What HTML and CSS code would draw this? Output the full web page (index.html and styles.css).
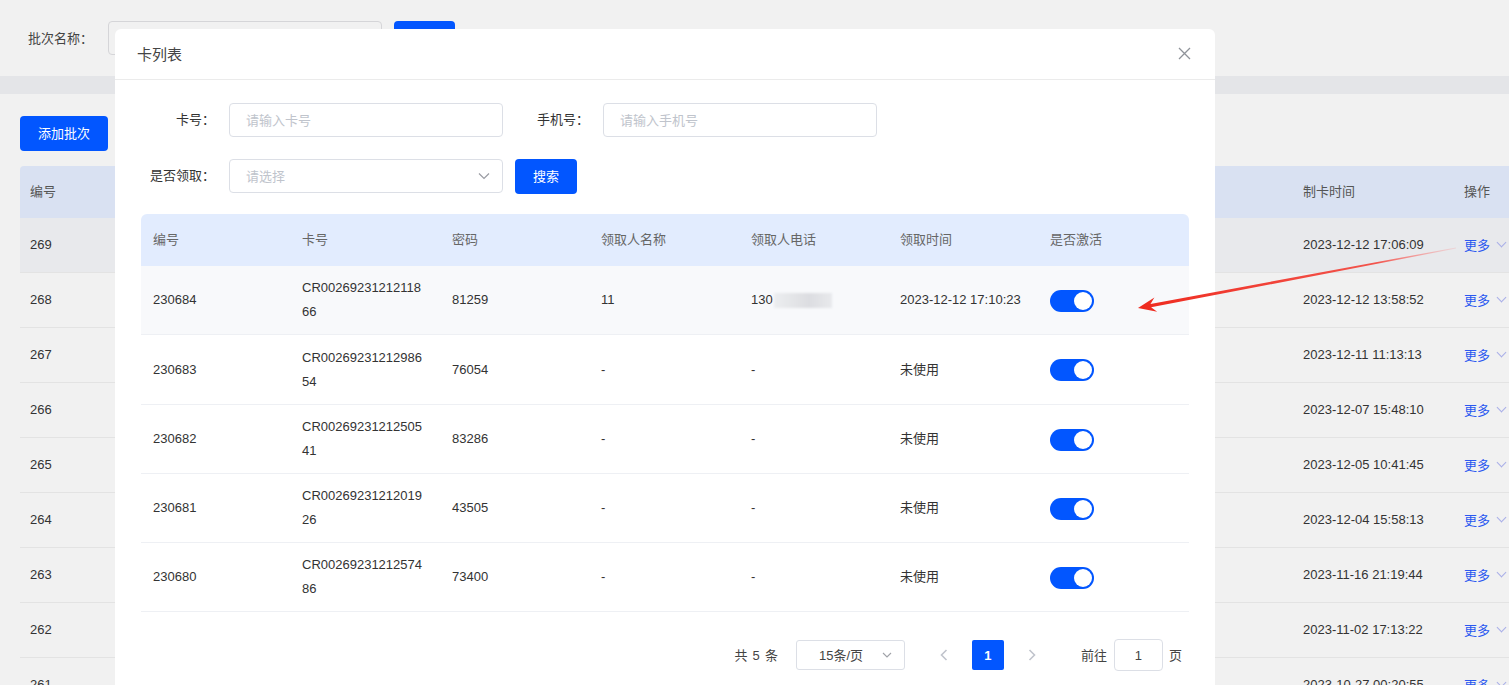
FILE: index.html
```html
<!DOCTYPE html>
<html lang="zh-CN">
<head>
<meta charset="utf-8">
<title>卡列表</title>
<link rel="stylesheet" href="styles.css">
</head>
<body>
<div class="page">
  <div class="search-bar">
    <span class="bg-label">批次名称：</span>
    <div class="bg-input"></div>
    <div class="bg-btn"></div>
  </div>
  <div class="band"></div>
  <div class="card">
    <div class="add-btn">添加批次</div>
    <div class="bg-table">
      <div class="bg-row bg-head"><div>编号</div><div>制卡时间</div><div>操作</div></div>
      <div class="bg-row hover"><div>269</div><div>2023-12-12 17:06:09</div><div class="more">更多<span class="chev"></span></div></div>
      <div class="bg-row"><div>268</div><div>2023-12-12 13:58:52</div><div class="more">更多<span class="chev"></span></div></div>
      <div class="bg-row"><div>267</div><div>2023-12-11 11:13:13</div><div class="more">更多<span class="chev"></span></div></div>
      <div class="bg-row"><div>266</div><div>2023-12-07 15:48:10</div><div class="more">更多<span class="chev"></span></div></div>
      <div class="bg-row"><div>265</div><div>2023-12-05 10:41:45</div><div class="more">更多<span class="chev"></span></div></div>
      <div class="bg-row"><div>264</div><div>2023-12-04 15:58:13</div><div class="more">更多<span class="chev"></span></div></div>
      <div class="bg-row"><div>263</div><div>2023-11-16 21:19:44</div><div class="more">更多<span class="chev"></span></div></div>
      <div class="bg-row"><div>262</div><div>2023-11-02 17:13:22</div><div class="more">更多<span class="chev"></span></div></div>
      <div class="bg-row"><div>261</div><div>2023-10-27 00:20:55</div><div class="more">更多<span class="chev"></span></div></div>
    </div>
  </div>
</div>

<div class="dialog">
  <div class="dlg-head">
    <span class="dlg-title">卡列表</span>
    <svg class="close" width="13" height="13" viewBox="0 0 13 13"><path d="M1 1L12 12M12 1L1 12" stroke="#8f9399" stroke-width="1.3" fill="none"/></svg>
  </div>
  <div class="dlg-body">
    <div class="form-row">
      <div class="form-item"><label class="f-label">卡号：</label><div class="f-input placeholder">请输入卡号</div></div>
      <div class="form-item"><label class="f-label">手机号：</label><div class="f-input placeholder">请输入手机号</div></div>
    </div>
    <div class="form-row">
      <div class="form-item"><label class="f-label">是否领取：</label><div class="f-input placeholder select">请选择<svg class="sel-chev" width="12" height="8" viewBox="0 0 12 8"><path d="M1 1.5L6 6.5L11 1.5" stroke="#9a9ca3" stroke-width="1.2" fill="none"/></svg></div></div>
      <div class="search-btn">搜索</div>
    </div>

    <div class="table">
      <div class="t-row t-head"><div>编号</div><div>卡号</div><div>密码</div><div>领取人名称</div><div>领取人电话</div><div>领取时间</div><div>是否激活</div></div>
      <div class="t-row first"><div>230684</div><div class="card-no">CR0026923121211866</div><div>81259</div><div>11</div><div>130<span class="blur"></span></div><div>2023-12-12 17:10:23</div><div><span class="switch"><span class="knob"></span></span></div></div>
      <div class="t-row tall"><div>230683</div><div class="card-no">CR0026923121298654</div><div>76054</div><div>-</div><div>-</div><div>未使用</div><div><span class="switch"><span class="knob"></span></span></div></div>
      <div class="t-row"><div>230682</div><div class="card-no">CR0026923121250541</div><div>83286</div><div>-</div><div>-</div><div>未使用</div><div><span class="switch"><span class="knob"></span></span></div></div>
      <div class="t-row"><div>230681</div><div class="card-no">CR0026923121201926</div><div>43505</div><div>-</div><div>-</div><div>未使用</div><div><span class="switch"><span class="knob"></span></span></div></div>
      <div class="t-row"><div>230680</div><div class="card-no">CR0026923121257486</div><div>73400</div><div>-</div><div>-</div><div>未使用</div><div><span class="switch"><span class="knob"></span></span></div></div>
    </div>

    <div class="pager">
      <span class="total">共 5 条</span>
      <div class="size-sel">15条/页<svg class="size-chev" width="10" height="6" viewBox="0 0 10 6"><path d="M1 1L5 5L9 1" stroke="#a0a2a8" stroke-width="1.1" fill="none"/></svg></div>
      <div class="pg-arrow"><svg width="8" height="12" viewBox="0 0 8 12"><path d="M6.5 1L1.5 6L6.5 11" stroke="#c0c4cc" stroke-width="1.6" fill="none"/></svg></div>
      <div class="pg-num">1</div>
      <div class="pg-arrow"><svg width="8" height="12" viewBox="0 0 8 12"><path d="M1.5 1L6.5 6L1.5 11" stroke="#c0c4cc" stroke-width="1.6" fill="none"/></svg></div>
      <span class="goto">前往</span>
      <div class="goto-input">1</div>
      <span class="goto-page">页</span>
    </div>
  </div>
</div>

<svg class="arrow" width="1509" height="685" viewBox="0 0 1509 685">
  <defs>
    <linearGradient id="ag" gradientUnits="userSpaceOnUse" x1="1456" y1="248" x2="1138" y2="308">
      <stop offset="0" stop-color="#ff6a6a" stop-opacity="0.15"/>
      <stop offset="0.25" stop-color="#f43a30" stop-opacity="0.85"/>
      <stop offset="1" stop-color="#ee2a1e"/>
    </linearGradient>
  </defs>
  <polygon fill="url(#ag)" points="1138,308 1157.2,311.8 1151.1,307.3 1456.1,248.5 1455.9,247.5 1150.5,303.9 1154.4,297.6"/>
</svg>
</body>
</html>
```
FILE: styles.css
```css
* { box-sizing: border-box; }
html, body { margin: 0; padding: 0; }
body {
  width: 1509px;
  height: 685px;
  overflow: hidden;
  background: #f1f1f1;
  font-family: "Liberation Sans", "Noto Sans CJK SC", sans-serif;
  font-size: 13px;
  color: #333;
  position: relative;
}
.page { width: 1509px; }

.search-bar {
  height: 76px;
  display: flex;
  align-items: center;
  padding: 0 0 2px 28px;
}
.bg-label { color: #444; width: 80px; }
.bg-input {
  width: 274px; height: 34px;
  border: 1px solid #d5d5d8; border-radius: 4px;
  background: #f1f1f1;
  margin-top: 2px;
}
.bg-btn {
  width: 61px; height: 34px; margin-left: 12px; margin-top: 2px;
  background: #0256ff; border-radius: 4px;
}
.band { height: 18px; background: #e4e5e8; }

.card { padding: 22px 0 0 20px; }
.add-btn {
  width: 88px; height: 35px;
  background: #0256ff; color: #fff;
  border-radius: 4px;
  display: flex; align-items: center; justify-content: center;
  padding-bottom: 2px;
  font-size: 13px;
}
.bg-table { margin-top: 15px; width: 1540px; }
.bg-row {
  display: grid;
  grid-template-columns: 1273px 161px 1fr;
  height: 55px;
  border-bottom: 1px solid #e3e3e3;
  align-items: center;
  padding-bottom: 2px;
}
.bg-row > div { padding-left: 10px; }
.bg-head { height: 52px; background: #d9e1f2; color: #555; border-bottom: none; border-radius: 4px 0 0 0; padding-bottom: 4px; }
.bg-row.hover { background: #e8e9ec; }
.more { color: #2a58f0; display: flex; align-items: center; }
.chev {
  display: inline-block; width: 7px; height: 7px;
  border-right: 1px solid #a9aee8; border-bottom: 1px solid #a9aee8;
  transform: rotate(45deg); margin: -4px 0 0 8px;
}

.dialog {
  position: absolute;
  left: 115px; top: 29px;
  width: 1100px; height: 700px;
  background: #fff;
  border-radius: 6px 6px 0 0;
}
.dlg-head {
  height: 51px;
  border-bottom: 1px solid #ebebeb;
  display: flex; align-items: center; justify-content: space-between;
  padding: 0 24px 2px 22px;
}
.dlg-title { font-size: 15px; color: #444; }
.close { display: block; }

.dlg-body { padding: 23px 26px 0 26px; }
.form-row { display: flex; align-items: center; margin-bottom: 22px; height: 34px; }
.form-row + .form-row { margin-bottom: 21px; }
.form-item { display: flex; align-items: center; margin-right: 12px; }
.f-label { width: 88px; text-align: right; padding: 0 14px 3px 0; color: #333; }
.f-input {
  width: 274px; height: 34px;
  border: 1px solid #dcdfe6; border-radius: 4px;
  padding: 0 16px 2px;
  display: flex; align-items: center;
}
.placeholder { color: #c0c4cc; }
.select { justify-content: space-between; padding-right: 12px; }
.sel-chev { display: block; margin-top: 2px; }
.search-btn {
  width: 62px; height: 35px;
  background: #0256ff; color: #fff; border-radius: 4px;
  display: flex; align-items: center; justify-content: center;
  padding-bottom: 2px;
}

.table { width: 1048px; }
.t-row {
  display: grid;
  grid-template-columns: 149px 150px 149px 150px 149px 150px 1fr;
  height: 69px;
  border-bottom: 1px solid #eef0f4;
  align-items: center;
  color: #333;
}
.t-row.tall { height: 70px; }
.t-row > div { padding: 0 12px; line-height: 24px; }
.t-head { height: 52px; background: #e2ecfe; color: #666; border-radius: 6px 6px 0 0; border-bottom: none; padding-bottom: 1px; }
.t-row.first { background: #f8f9fb; }
.card-no { word-break: break-all; }
.blur {
  display: inline-block; vertical-align: middle;
  width: 58px; height: 15px; margin-left: 1px;
  background: linear-gradient(90deg, #eceef0, #e2e3e6 40%, #dcdde1 60%, #e8e9ec);
  filter: blur(1.2px);
}
.switch {
  display: inline-flex; align-items: center; justify-content: flex-end;
  width: 44px; height: 22px; border-radius: 11px;
  background: #0256ff; padding: 2px; vertical-align: middle;
}
.knob { width: 18px; height: 18px; border-radius: 50%; background: #fff; }

.pager {
  display: flex; align-items: center; justify-content: flex-end;
  width: 1048px; margin-top: 27px; padding-right: 7px;
  color: #444;
}
.total { margin-right: 18px; word-spacing: 1.5px; padding-bottom: 1px; }
.size-sel {
  width: 109px; height: 30px;
  border: 1px solid #dcdfe6; border-radius: 3px;
  display: flex; align-items: center; justify-content: space-between;
  padding: 0 12px 1px 22px; margin-right: 25px; color: #444;
}
.size-chev { display: block; }
.pg-arrow { width: 28px; height: 30px; display: flex; align-items: center; justify-content: center; }
.pg-num {
  width: 32px; height: 30px; margin: 0 14px;
  background: #0256ff; color: #fff; border-radius: 2px;
  display: flex; align-items: center; justify-content: center; font-weight: bold;
}
.goto { margin-left: 35px; padding-bottom: 1px; }
.goto-input {
  width: 49px; height: 32px; margin: 0 6px 0 7px;
  border: 1px solid #dcdfe6; border-radius: 4px;
  display: flex; align-items: center; justify-content: center;
}
.goto-page { padding-bottom: 1px; }

.arrow { position: absolute; left: 0; top: 0; pointer-events: none; }
```
